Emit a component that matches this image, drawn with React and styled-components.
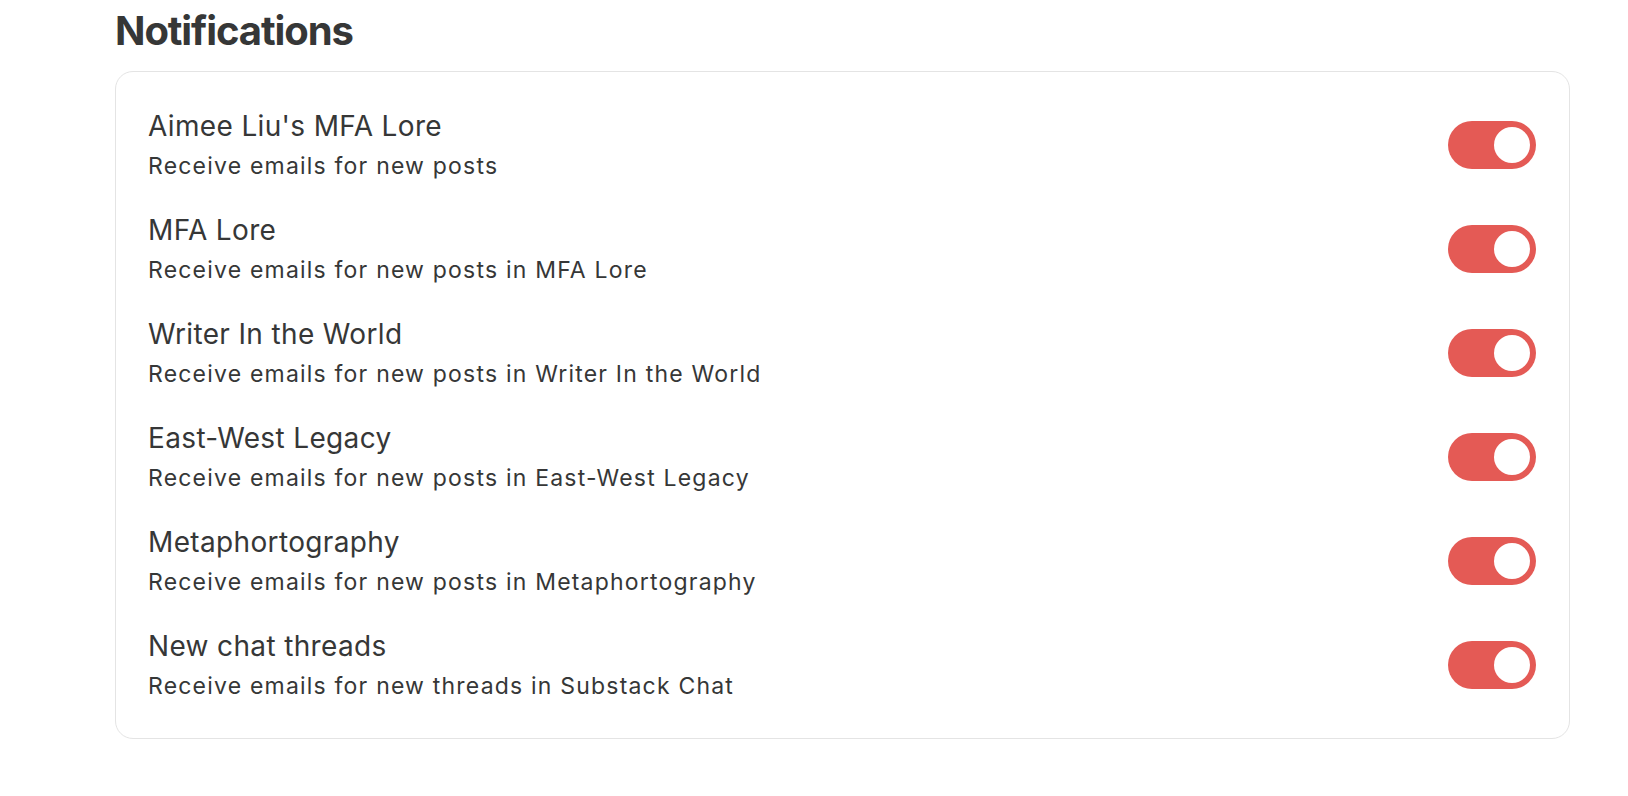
import React, { useState } from "react";
import styled, { createGlobalStyle } from "styled-components";

const GlobalStyle = createGlobalStyle`
  html, body {
    margin: 0;
    padding: 0;
    background: #ffffff;
  }
  body {
    font-family: Inter, "Noto Sans", "Liberation Sans", sans-serif;
    color: #363737;
  }
`;

const Page = styled.div`
  padding: 6px 58px 40px 115px;
  display: flex;
  flex-direction: column;
`;

const Heading = styled.h1`
  margin: 0 0 16px 0;
  font-size: 40px;
  line-height: 49px;
  font-weight: 700;
  letter-spacing: -1.1px;
  color: #363737;
`;

const Card = styled.div`
  width: 1455px;
  box-sizing: border-box;
  border: 1px solid #e4e4e4;
  border-radius: 18px;
  padding: 36px 33px 37px 32px;
  display: flex;
  flex-direction: column;
  gap: 31px;
`;

const Row = styled.div`
  display: flex;
  align-items: center;
  justify-content: space-between;
`;

const TextBlock = styled.div`
  display: flex;
  flex-direction: column;
`;

const Title = styled.div`
  font-size: 28px;
  line-height: 36px;
  margin-bottom: 7px;
  color: #363737;
  letter-spacing: 0.35px;
`;

const Subtitle = styled.div`
  font-size: 23px;
  line-height: 30px;
  color: #363737;
  letter-spacing: 1.2px;
`;

const Toggle = styled.button`
  width: 88px;
  height: 48px;
  border: none;
  border-radius: 24px;
  padding: 6px;
  background: ${(p) => (p.$on ? "#e45a55" : "#d6d6d6")};
  display: flex;
  justify-content: ${(p) => (p.$on ? "flex-end" : "flex-start")};
  align-items: center;
  cursor: pointer;
  flex-shrink: 0;
`;

const Knob = styled.span`
  width: 36px;
  height: 36px;
  border-radius: 50%;
  background: #ffffff;
  display: block;
`;

const items = [
  ["Aimee Liu's MFA Lore", "Receive emails for new posts"],
  ["MFA Lore", "Receive emails for new posts in MFA Lore"],
  ["Writer In the World", "Receive emails for new posts in Writer In the World"],
  ["East-West Legacy", "Receive emails for new posts in East-West Legacy"],
  ["Metaphortography", "Receive emails for new posts in Metaphortography"],
  ["New chat threads", "Receive emails for new threads in Substack Chat"],
];

export default function App() {
  const [state, setState] = useState(items.map(() => true));
  return (
    <>
      <GlobalStyle />
      <Page>
        <Heading>Notifications</Heading>
        <Card>
          {items.map(([t, s], i) => (
            <Row key={t}>
              <TextBlock>
                <Title>{t}</Title>
                <Subtitle>{s}</Subtitle>
              </TextBlock>
              <Toggle
                $on={state[i]}
                onClick={() =>
                  setState((st) => st.map((v, j) => (j === i ? !v : v)))
                }
              >
                <Knob />
              </Toggle>
            </Row>
          ))}
        </Card>
      </Page>
    </>
  );
}
